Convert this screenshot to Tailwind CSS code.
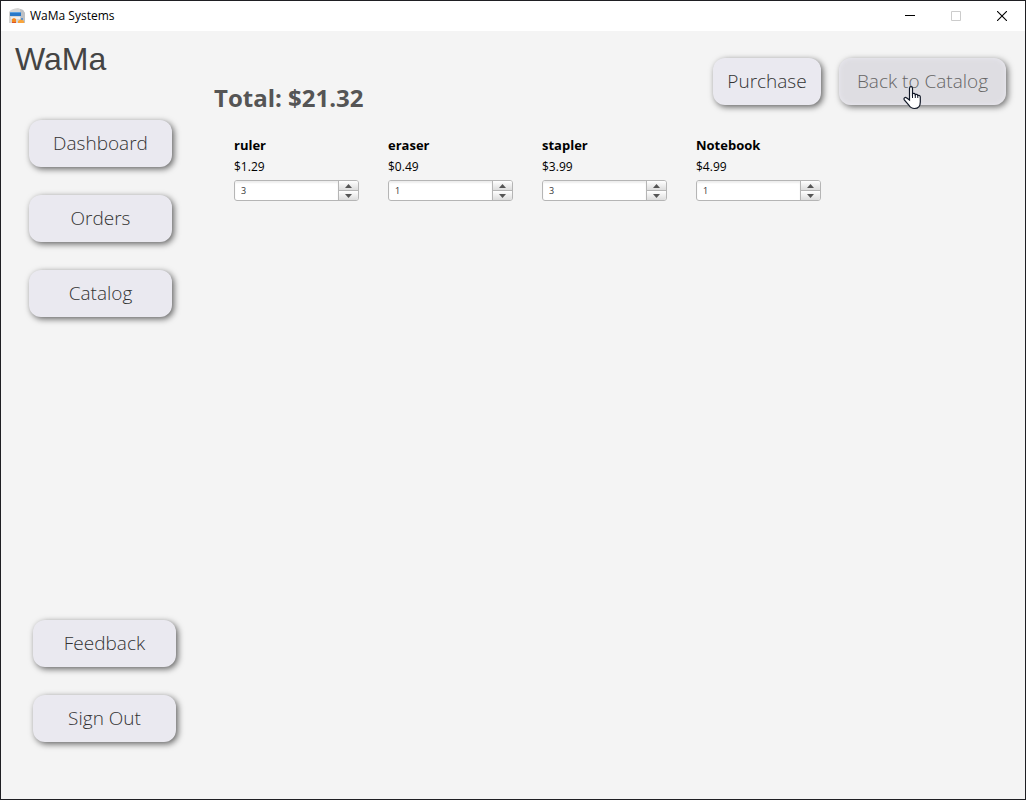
<!DOCTYPE html>
<html lang="en">
<head>
<meta charset="utf-8">
<meta name="viewport" content="width=device-width, initial-scale=1">
<title>WaMa Systems</title>
<script src="https://cdn.jsdelivr.net/npm/@tailwindcss/browser@4"></script>
</head>
<body class="flex min-h-screen flex-col border border-[#1f1f23] bg-[#f4f4f4] font-['Open_Sans',sans-serif] text-black">
<header class="flex h-[30px] items-center bg-white">
  <svg class="ml-2 size-4" viewBox="0 0 16 16" aria-hidden="true">
    <path d="M0 4Q1 2 3 1.500Q6 0 9 0L14 2L16 5V15H0z" fill="#d6d6d6"/>
    <path d="M11 1l3 1 2 3v10h-4z" fill="#bdc0c4"/>
    <path d="M1 4h11v4H1z" fill="#2878c8"/>
    <path d="M1 4h11v1H1z" fill="#5a9fe0"/>
    <path d="M2 9h9v2H2z" fill="#eee"/>
    <path d="M3 11l2-1 2 1v4H3z" fill="#f58a1f"/>
    <path d="M3 14h4v1H3z" fill="#d9542b"/>
    <path d="M9 13l3-2 3 2v2H9z" fill="#f9a53c"/>
    <circle cx="13" cy="11" r="1" fill="#3f86cf"/>
  </svg>
  <span class="ml-[5px] flex-1 text-[12px]">WaMa Systems</span>
  <button aria-label="Minimize" class="flex h-full w-[46px] items-center justify-center"><svg class="size-[10px]" viewBox="0 0 10 10"><path d="M0 4.5h10" stroke="#000"/></svg></button>
  <button aria-label="Maximize" disabled class="flex h-full w-[46px] items-center justify-center"><svg class="size-[10px]" viewBox="0 0 10 10"><path d="M.5.5h9v9h-9z" fill="none" stroke="#ccc"/></svg></button>
  <button aria-label="Close" class="flex h-full w-[46px] items-center justify-center"><svg class="size-[10px]" viewBox="0 0 10 10"><path d="M0 0l10 10M10 0L0 10" stroke="#000" stroke-width="1.1"/></svg></button>
</header>
<div class="flex flex-1">
  <nav class="flex w-[213px] shrink-0 flex-col pb-[57px] pl-7">
    <h1 class="-ml-[14px] pt-2 font-['Liberation_Sans',sans-serif] text-[32px] leading-10 text-[#444]">WaMa</h1>
    <div class="mt-[41px] flex flex-col gap-7">
      <button class="h-[47px] w-[143px] rounded-xl bg-[#eae9f0] text-[19px] font-[350] text-[#333] shadow-[2px_2px_6px_rgba(0,0,0,0.6)]">Dashboard</button>
      <button class="h-[47px] w-[143px] rounded-xl bg-[#eae9f0] text-[19px] font-[350] text-[#333] shadow-[2px_2px_6px_rgba(0,0,0,0.6)]">Orders</button>
      <button class="h-[47px] w-[143px] rounded-xl bg-[#eae9f0] text-[19px] font-[350] text-[#333] shadow-[2px_2px_6px_rgba(0,0,0,0.6)]">Catalog</button>
    </div>
    <div class="mt-auto ml-1 flex flex-col gap-7">
      <button class="h-[47px] w-[143px] rounded-xl bg-[#eae9f0] text-[19px] font-[350] text-[#333] shadow-[2px_2px_6px_rgba(0,0,0,0.6)]">Feedback</button>
      <button class="h-[47px] w-[143px] rounded-xl bg-[#eae9f0] text-[19px] font-[350] text-[#333] shadow-[2px_2px_6px_rgba(0,0,0,0.6)]">Sign Out</button>
    </div>
  </nav>
  <main class="flex-1 pt-[27px] pr-[19px]">
    <div class="flex items-start">
      <h2 class="flex-1 pt-[22px] text-[24px] leading-9 font-bold text-[#555]">Total: $21.32</h2>
      <div class="flex gap-[18px]">
        <button class="h-[47px] w-[108px] rounded-xl bg-[#eae9f0] text-[19px] font-[350] text-[#333] shadow-[2px_2px_6px_rgba(0,0,0,0.6)]">Purchase</button>
        <button class="relative h-[47px] w-[167px] rounded-xl bg-[#dedde2] text-[19px] font-[350] whitespace-nowrap text-[#666] shadow-[2px_2px_6px_rgba(0,0,0,0.55),inset_0_0_5px_#eae9f0]">Back to Catalog
          <svg class="absolute top-7 left-16 h-6 w-[18px]" viewBox="0 0 18 24" aria-hidden="true"><path d="M6.500 14V2.500c0-2.400 3-2.400 3 0V8c.6-1 2.600-.8 2.800.7.8-.8 2.400-.4 2.500.9 1-.6 2.500 0 2.500 1.500V16c0 4-2 6.500-5.800 6.500-3 0-4.500-1.500-5.700-3.500L1.300 13.800c-1-1.900 1.100-3.100 2.500-1.700z" fill="#fff" stroke="#111827" stroke-width="1.200"/><path d="M9.500 7.500V12M12.300 8.500V12M14.800 9.500V12" stroke="#111827"/></svg>
        </button>
      </div>
    </div>
    <div class="mt-[17px] flex flex-wrap gap-[29px] pl-5">
      <section class="w-[125px]">
        <h3 class="text-[13px] leading-6 font-bold">ruler</h3>
        <p class="text-[12px] leading-5">$1.29</p>
        <div class="mt-[3px] flex h-[21px] overflow-hidden rounded-[3px] border border-[#b5b5b5] bg-white">
          <input aria-label="ruler quantity" value="3" class="w-0 flex-1 px-[6px] text-[9px] text-[#333] shadow-[inset_0_2px_2px_#eee] outline-none">
          <div class="flex w-5 flex-col divide-y divide-[#b5b5b5] border-l border-[#b5b5b5]">
            <button aria-label="Increase ruler" class="flex flex-1 items-center justify-center bg-linear-to-b from-white to-[#ddd]"><svg class="h-1 w-[7px]" viewBox="0 0 7 4"><path d="M0 4 3.500 0 7 4z" fill="#555"/></svg></button>
            <button aria-label="Decrease ruler" class="flex flex-1 items-center justify-center bg-linear-to-b from-white to-[#ddd]"><svg class="h-1 w-[7px]" viewBox="0 0 7 4"><path d="M0 0h7L3.500 4z" fill="#555"/></svg></button>
          </div>
        </div>
      </section>
      <section class="w-[125px]">
        <h3 class="text-[13px] leading-6 font-bold">eraser</h3>
        <p class="text-[12px] leading-5">$0.49</p>
        <div class="mt-[3px] flex h-[21px] overflow-hidden rounded-[3px] border border-[#b5b5b5] bg-white">
          <input aria-label="eraser quantity" value="1" class="w-0 flex-1 px-[6px] text-[9px] text-[#333] shadow-[inset_0_2px_2px_#eee] outline-none">
          <div class="flex w-5 flex-col divide-y divide-[#b5b5b5] border-l border-[#b5b5b5]">
            <button aria-label="Increase eraser" class="flex flex-1 items-center justify-center bg-linear-to-b from-white to-[#ddd]"><svg class="h-1 w-[7px]" viewBox="0 0 7 4"><path d="M0 4 3.500 0 7 4z" fill="#555"/></svg></button>
            <button aria-label="Decrease eraser" class="flex flex-1 items-center justify-center bg-linear-to-b from-white to-[#ddd]"><svg class="h-1 w-[7px]" viewBox="0 0 7 4"><path d="M0 0h7L3.500 4z" fill="#555"/></svg></button>
          </div>
        </div>
      </section>
      <section class="w-[125px]">
        <h3 class="text-[13px] leading-6 font-bold">stapler</h3>
        <p class="text-[12px] leading-5">$3.99</p>
        <div class="mt-[3px] flex h-[21px] overflow-hidden rounded-[3px] border border-[#b5b5b5] bg-white">
          <input aria-label="stapler quantity" value="3" class="w-0 flex-1 px-[6px] text-[9px] text-[#333] shadow-[inset_0_2px_2px_#eee] outline-none">
          <div class="flex w-5 flex-col divide-y divide-[#b5b5b5] border-l border-[#b5b5b5]">
            <button aria-label="Increase stapler" class="flex flex-1 items-center justify-center bg-linear-to-b from-white to-[#ddd]"><svg class="h-1 w-[7px]" viewBox="0 0 7 4"><path d="M0 4 3.500 0 7 4z" fill="#555"/></svg></button>
            <button aria-label="Decrease stapler" class="flex flex-1 items-center justify-center bg-linear-to-b from-white to-[#ddd]"><svg class="h-1 w-[7px]" viewBox="0 0 7 4"><path d="M0 0h7L3.500 4z" fill="#555"/></svg></button>
          </div>
        </div>
      </section>
      <section class="w-[125px]">
        <h3 class="text-[13px] leading-6 font-bold">Notebook</h3>
        <p class="text-[12px] leading-5">$4.99</p>
        <div class="mt-[3px] flex h-[21px] overflow-hidden rounded-[3px] border border-[#b5b5b5] bg-white">
          <input aria-label="Notebook quantity" value="1" class="w-0 flex-1 px-[6px] text-[9px] text-[#333] shadow-[inset_0_2px_2px_#eee] outline-none">
          <div class="flex w-5 flex-col divide-y divide-[#b5b5b5] border-l border-[#b5b5b5]">
            <button aria-label="Increase Notebook" class="flex flex-1 items-center justify-center bg-linear-to-b from-white to-[#ddd]"><svg class="h-1 w-[7px]" viewBox="0 0 7 4"><path d="M0 4 3.500 0 7 4z" fill="#555"/></svg></button>
            <button aria-label="Decrease Notebook" class="flex flex-1 items-center justify-center bg-linear-to-b from-white to-[#ddd]"><svg class="h-1 w-[7px]" viewBox="0 0 7 4"><path d="M0 0h7L3.500 4z" fill="#555"/></svg></button>
          </div>
        </div>
      </section>
    </div>
  </main>
</div>
</body>
</html>
